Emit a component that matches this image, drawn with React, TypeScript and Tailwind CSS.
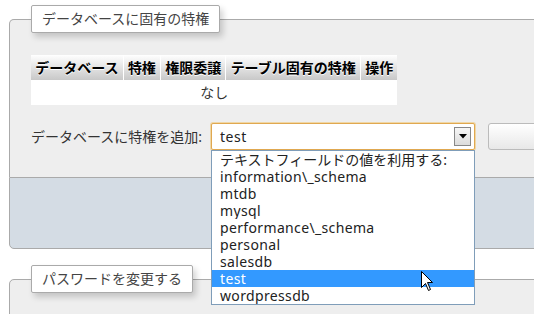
import React from "react";

const items = [
  "テキストフィールドの値を利用する:",
  "information\\_schema",
  "mtdb",
  "mysql",
  "performance\\_schema",
  "personal",
  "salesdb",
  "test",
  "wordpressdb",
];

export default function App() {
  return (
    <div
      className="relative w-[534px] h-[314px] overflow-hidden bg-white pl-[9px] pt-[5px]"
      style={{ fontFamily: '"Noto Sans", "Noto Sans CJK JP", sans-serif' }}
    >
      <div className="w-[640px]">
        <fieldset className="m-0 min-w-0 border border-b-0 border-[#aaa] rounded-t-[5px] bg-[#eee] pl-[21px] pt-[22px] pb-[27px]">
          <legend className="h-[28px] px-[10px] bg-white border border-[#aaa] rounded-[2px] shadow-[3px_4px_6px_rgba(0,0,0,0.18)] text-[14px] leading-[26px] text-[#444]">
            データベースに固有の特権
          </legend>
          <table className="bg-white border-separate border-spacing-0 text-[14px]">
            <thead>
              <tr>
                {["データベース", "特権", "権限委譲", "テーブル固有の特権", "操作"].map((h, i) => (
                  <th
                    key={h}
                    className={`h-[25px] px-[4.2px] font-bold text-black whitespace-nowrap bg-gradient-to-b from-white to-[#c8c8c8] [text-shadow:0_1px_0_#fff] ${
                      i < 4 ? "border-r border-white" : ""
                    }`}
                  >
                    {h}
                  </th>
                ))}
              </tr>
            </thead>
            <tbody>
              <tr>
                <td colSpan={5} className="h-[25px] text-center text-[#333]">
                  なし
                </td>
              </tr>
            </tbody>
          </table>
          <div className="mt-[18px] flex items-center">
            <span className="w-[180px] text-[14px] text-[#333] whitespace-nowrap">データベースに特権を追加:</span>
            <div className="relative w-[264px] h-[27px]">
              <div className="w-full h-full bg-white border border-[#e0a850] rounded-[2px] shadow-[0_0_0_1px_rgba(240,200,120,0.6)] flex items-center pl-[8px] text-[14px] text-[#222] tracking-[0.5px]">
                test
                <div className="ml-auto mr-[3px] w-[17px] h-[19px] border border-[#888] bg-gradient-to-b from-[#f6f6f6] to-[#dcdcdc] flex items-center justify-center">
                  <svg width="8" height="5" viewBox="0 0 8 5">
                    <path d="M0 0 H8 L4 4.5 Z" fill="#000" />
                  </svg>
                </div>
              </div>
              <div className="absolute left-0 top-[27px] w-[264px] bg-white border border-[#7f9db9] z-10">
                {items.map((it, i) => (
                  <div
                    key={it}
                    className={`h-[17px] leading-[17px] pl-[8px] text-[14px] whitespace-nowrap overflow-hidden ${
                      i > 0 ? "tracking-[0.35px]" : ""
                    } ${it === "test" ? "bg-[#3399ff] text-white" : "text-[#222]"}`}
                  >
                    {it}
                  </div>
                ))}
              </div>
            </div>
            <button className="ml-[13px] w-[80px] h-[27px] border border-[#bbb] rounded-[3px] bg-gradient-to-b from-white to-[#e8e8e8]" />
          </div>
        </fieldset>
        <div className="h-[72px] border border-[#aaa] rounded-b-[5px] bg-[#d4dce4]" />
        <fieldset className="mt-[16px] m-0 min-w-0 border border-[#aaa] rounded-t-[5px] bg-[#eee] pl-[21px] pt-[22px] h-[120px]">
          <legend className="h-[28px] px-[10px] bg-white border border-[#aaa] rounded-[2px] shadow-[3px_4px_6px_rgba(0,0,0,0.18)] text-[14px] leading-[26px] text-[#444]">
            パスワードを変更する
          </legend>
        </fieldset>
      </div>
      <svg className="absolute left-[421px] top-[271px] z-20" width="13" height="21" viewBox="0 0 13 21">
        <path
          d="M0.5 0.5 L0.5 16.5 L4.5 12.5 L7.5 19.5 L9.5 18.5 L6.5 11.5 L11.5 11.5 Z"
          fill="#fff"
          stroke="#000"
          strokeWidth="1"
          strokeLinejoin="miter"
        />
      </svg>
    </div>
  );
}
